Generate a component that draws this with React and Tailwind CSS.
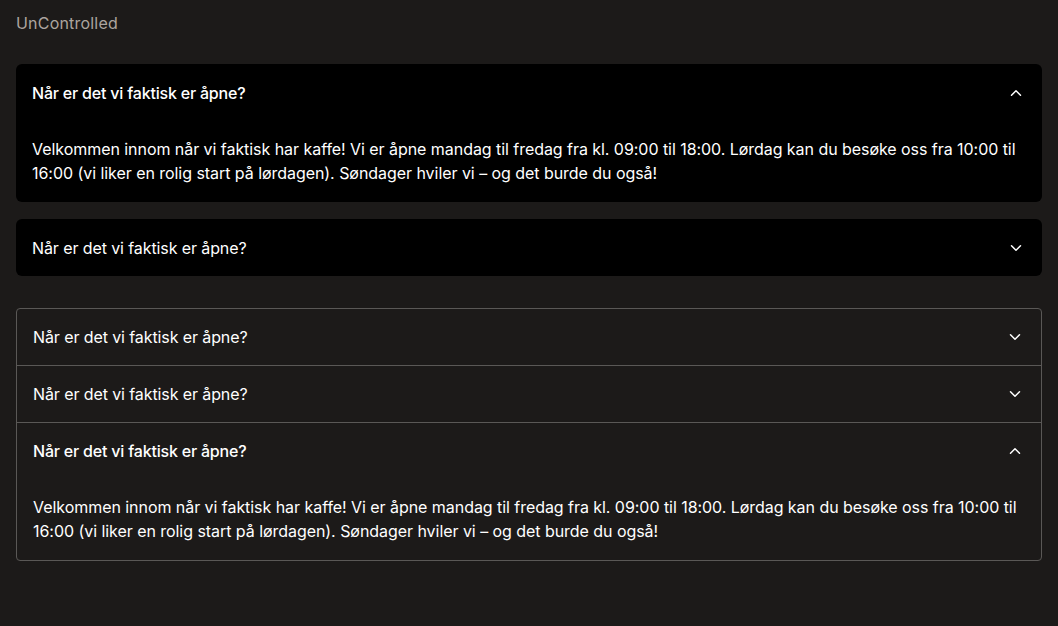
import React, { useState } from "react";
import { ChevronDown, ChevronUp } from "lucide-react";

const Q = "Når er det vi faktisk er åpne?";
const A =
  "Velkommen innom når vi faktisk har kaffe! Vi er åpne mandag til fredag fra kl. 09:00 til 18:00. Lørdag kan du besøke oss fra 10:00 til 16:00 (vi liker en rolig start på lørdagen). Søndager hviler vi – og det burde du også!";

function Item({ open, onToggle, bordered }) {
  return (
    <div className={bordered ? "" : "bg-black rounded-md"}>
      <button
        onClick={onToggle}
        className={
          "w-full flex items-center justify-between pl-4 pr-[17px] text-left text-white " +
          (bordered ? "h-14" : "h-[57px]")
        }
      >
        <span className={open ? "font-medium tracking-[-0.2px]" : "font-normal tracking-[-0.1px]"}>{Q}</span>
        {open ? <ChevronUp size={18} strokeWidth={2} /> : <ChevronDown size={18} strokeWidth={2} />}
      </button>
      {open && (
        <div className="px-4 pt-4 pb-[17px] text-white leading-6 tracking-[-0.05px]">{A}</div>
      )}
    </div>
  );
}

export default function App() {
  const [a, setA] = useState([true, false]);
  const [b, setB] = useState([false, false, true]);
  return (
    <div
      className="min-h-screen bg-[#1c1a19] px-4 pt-[11px] pb-4 text-base"
      style={{ fontFamily: "Inter, 'Noto Sans', sans-serif" }}
    >
      <div className="text-[#aca59f] leading-6 tracking-[0.2px]">UnControlled</div>
      <div className="mt-[29px] flex flex-col gap-[17px]">
        {a.map((o, i) => (
          <Item key={i} open={o} onToggle={() => setA(a.map((v, j) => (j === i ? !v : v)))} />
        ))}
      </div>
      <div className="mt-8 border border-[#5a5856] rounded-[4px] divide-y divide-[#5a5856]">
        {b.map((o, i) => (
          <Item key={i} bordered open={o} onToggle={() => setB(b.map((v, j) => (j === i ? !v : v)))} />
        ))}
      </div>
    </div>
  );
}
